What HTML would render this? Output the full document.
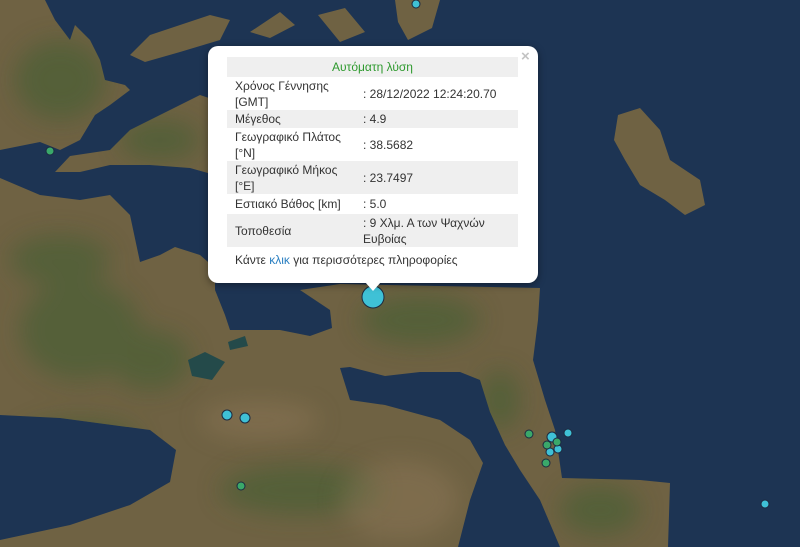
<!DOCTYPE html>
<html><head><meta charset="utf-8"><style>
html,body{margin:0;padding:0;width:800px;height:547px;overflow:hidden;background:#1d3453;font-family:"Liberation Sans",Arial,sans-serif}
#map{position:absolute;left:0;top:0}
.pop{position:absolute;left:208px;top:46px;width:330px;height:237px;background:#fff;border-radius:10px;box-shadow:0 2px 8px rgba(0,0,0,.4)}
.tip{position:absolute;left:365px;top:282px;width:0;height:0;border-left:8px solid transparent;border-right:8px solid transparent;border-top:9px solid #fff}
.x{position:absolute;left:313px;top:2px;color:#c3c3c3;font:bold 15px "Liberation Sans",sans-serif}
table{position:absolute;left:19px;top:11px;width:291px;border-collapse:collapse;font-size:12px;color:#333}
td{padding:0 0 0 8px;line-height:16px;vertical-align:middle}
tr.g td{background:#efefef}
td.v{padding-left:0;width:155px}
.f{position:absolute;left:27px;top:207px;font-size:12px;color:#333}
.f span{color:#2a7fc1}
</style></head><body>
<svg id="map" width="800" height="547" viewBox="0 0 800 547">
<defs>
<filter id="b"><feGaussianBlur stdDeviation="12"/></filter>
<clipPath id="land">
<path d="M0 0 L45 0 L55 20 L70 40 L75 25 L90 40 L100 60 L105 80 L125 85 L130 90 L110 105 L95 115 L80 140 L60 150 L40 142 L0 150 Z"/>
<path d="M55 172 L70 156 L110 150 L130 130 L160 115 L200 95 L215 100 L215 175 L190 168 L150 165 L110 165 L80 172 Z"/>
<path d="M130 55 L150 35 L180 25 L210 15 L230 20 L220 40 L180 52 L145 62 Z"/>
<path d="M250 32 L280 12 L295 25 L270 38 Z"/>
<path d="M318 15 L345 8 L365 32 L340 42 Z"/>
<path d="M395 0 L440 0 L432 28 L408 40 L398 22 Z"/>
<path d="M0 178 L40 195 L80 200 L110 195 L130 215 L140 262 L160 255 L175 247 L200 255 L215 268 L215 290 L225 315 L230 330 L280 330 L310 336 L332 328 L330 310 L300 290 L340 284 L540 288 L538 320 L533 360 L545 400 L555 430 L562 478 L640 480 L670 483 L668 547 L560 547 L540 500 L520 470 L505 445 L490 412 L480 380 L460 372 L420 372 L385 376 L350 367 L340 368 L350 400 L385 405 L440 420 L470 440 L483 463 L470 500 L458 547 L0 547 L0 540 L70 525 L130 505 L170 482 L176 450 L150 430 L60 418 L0 415 Z"/>
<path d="M618 115 L640 108 L660 130 L670 160 L700 180 L705 205 L685 215 L665 200 L640 185 L625 160 L614 140 Z"/>
</clipPath>
</defs>
<rect width="800" height="547" fill="#1d3453"/>
<g clip-path="url(#land)">
<rect width="800" height="547" fill="#6f6243"/>
<g opacity=".55" fill="#3f5f30" filter="url(#b)">
<ellipse cx="60" cy="80" rx="45" ry="40"/><ellipse cx="160" cy="140" rx="40" ry="20"/>
<ellipse cx="80" cy="330" rx="60" ry="50"/><ellipse cx="150" cy="360" rx="40" ry="30"/><ellipse cx="80" cy="440" rx="60" ry="20"/>
<ellipse cx="420" cy="320" rx="60" ry="25"/><ellipse cx="500" cy="400" rx="20" ry="30"/><ellipse cx="600" cy="510" rx="40" ry="25"/>
<ellipse cx="300" cy="490" rx="80" ry="25"/><ellipse cx="60" cy="260" rx="50" ry="25"/>
</g>
<g opacity=".35" fill="#9a8060" filter="url(#b)">
<ellipse cx="400" cy="500" rx="60" ry="40"/><ellipse cx="260" cy="420" rx="60" ry="20"/>
</g>
</g>
<path d="M188 360 L205 352 L225 362 L212 380 L192 376 Z M228 342 L245 336 L248 346 L230 350 Z" fill="#244a4a"/>
<g stroke="#1c2a40" stroke-width="1">
<circle cx="373" cy="297" r="11" fill="#3fc1d6"/>
<circle cx="227" cy="415" r="5" fill="#3fc1d6"/><circle cx="245" cy="418" r="5" fill="#3fc1d6"/>
<circle cx="50" cy="151" r="4" fill="#3aa86a"/><circle cx="241" cy="486" r="4" fill="#3aa86a"/>
<circle cx="529" cy="434" r="4" fill="#3aa86a"/><circle cx="546" cy="463" r="4" fill="#3aa86a"/>
<circle cx="552" cy="437" r="5" fill="#3fc1d6"/><circle cx="568" cy="433" r="4" fill="#3fc1d6"/>
<circle cx="558" cy="449" r="4" fill="#3fc1d6"/><circle cx="550" cy="452" r="4" fill="#3fc1d6"/>
<circle cx="557" cy="442" r="4" fill="#3aa86a"/><circle cx="547" cy="445" r="4" fill="#3aa86a"/>
<circle cx="765" cy="504" r="4" fill="#3fc1d6"/><circle cx="416" cy="4" r="4" fill="#3fc1d6"/>
</g>
</svg>
<div class="pop">
<div class="x">×</div>
<table>
<tr class="g"><td colspan="2" style="text-align:center;color:#2e9a2e;height:20px;padding:0">Αυτόματη λύση</td></tr>
<tr><td style="height:33px">Χρόνος Γέννησης<br>[GMT]</td><td class="v">: 28/12/2022 12:24:20.70</td></tr>
<tr class="g"><td style="height:18px">Μέγεθος</td><td class="v">: 4.9</td></tr>
<tr><td style="height:33px">Γεωγραφικό Πλάτος<br>[°N]</td><td class="v">: 38.5682</td></tr>
<tr class="g"><td style="height:33px">Γεωγραφικό Μήκος<br>[°E]</td><td class="v">: 23.7497</td></tr>
<tr><td style="height:20px">Εστιακό Βάθος [km]</td><td class="v">: 5.0</td></tr>
<tr class="g"><td style="height:33px">Τοποθεσία</td><td class="v">: 9 Χλμ. Α των Ψαχνών<br>Ευβοίας</td></tr>
</table>
<div class="f">Κάντε <span>κλικ</span> για περισσότερες πληροφορίες</div>
</div>
<div class="tip"></div>
</body></html>
